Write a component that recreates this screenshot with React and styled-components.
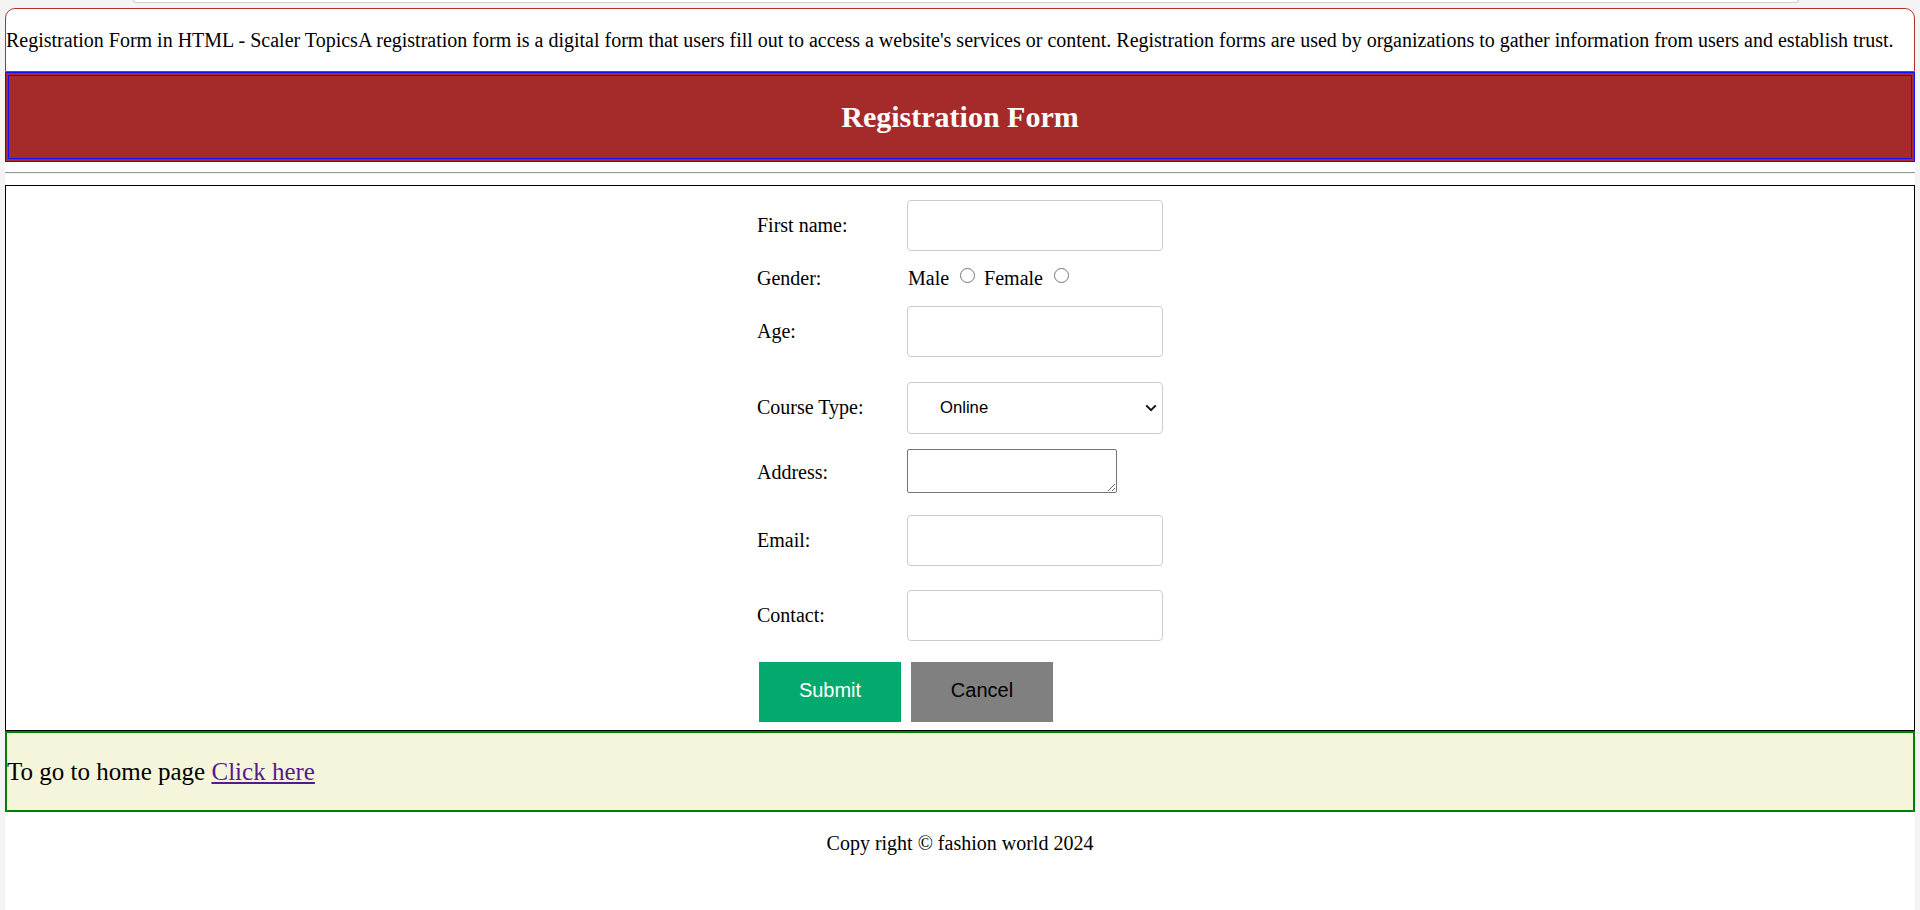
import React from "react";
import styled, { createGlobalStyle } from "styled-components";

const Global = createGlobalStyle`
  html, body { margin: 0; padding: 0; }
  body {
    background: #f4f4f4;
    font-family: "Liberation Serif", "Times New Roman", serif;
    font-size: 20px;
    color: #000;
  }
`;

const Page = styled.div`
  min-height: 910px;
  padding: 0 5px;
  display: flex;
  flex-direction: column;
`;

const TopStrip = styled.div`
  height: 8px;
  display: flex;
`;

const TabEdge = styled.div`
  margin-left: 128px;
  width: 1664px;
  height: 2px;
  background: #fff;
  border: 1px solid #cfcfcf;
  border-top: none;
  border-radius: 0 0 10px 10px;
`;

const Main = styled.main`
  flex: 1;
  background: #fff;
  border-radius: 10px 10px 0 0;
  display: flex;
  flex-direction: column;
`;

const IntroCard = styled.section`
  border: 1px solid #b3302b;
  border-radius: 10px 10px 0 0;
`;

const Intro = styled.p`
  margin: 20px 0;
  line-height: 22px;
  white-space: nowrap;
`;

const Header = styled.header`
  background: #a52a2a;
  border: 4px double #1010ff;
  padding: 24px 0;
  text-align: center;
`;

const Title = styled.h2`
  margin: 0;
  font-size: 30px;
  line-height: 34px;
  font-weight: bold;
  color: #fff;
`;

const Rule = styled.hr`
  height: 0;
  margin: 10px 0 11px;
  border: none;
  border-top: 1px solid #9a9a9a;
  border-bottom: 1px solid #eeeeee;
`;

const FormBox = styled.section`
  border: 1px solid #000;
  padding: 4px 0 8px;
`;

const Form = styled.form`
  width: 406px;
  margin: 0 auto;
  display: flex;
  flex-direction: column;
`;

const Row = styled.div`
  display: grid;
  grid-template-columns: 150px 256px;
  align-items: center;
  height: ${(p) => p.$h}px;
`;

const Label = styled.label`
  line-height: 23px;
`;

const TextInput = styled.input`
  box-sizing: border-box;
  width: 256px;
  height: 51px;
  border: 1px solid #cccccc;
  border-radius: 4px;
  padding: 0 25px;
  margin: 0;
  font-family: "Liberation Sans", Arial, sans-serif;
  font-size: 16.67px;
  background: #fff;
`;

const Choice = styled.div`
  line-height: 23px;
  white-space: nowrap;
  padding-left: 1px;
`;

const Radio = styled.input`
  appearance: none;
  width: 15px;
  height: 15px;
  margin: 0 4px 2px 6px;
  border: 1px solid #767676;
  border-radius: 50%;
  background: #fff;
  vertical-align: baseline;
  box-sizing: border-box;
`;

const SelectWrap = styled.div`
  position: relative;
  width: 256px;
  height: 52px;
`;

const Select = styled.select`
  appearance: none;
  box-sizing: border-box;
  width: 100%;
  height: 100%;
  border: 1px solid #cccccc;
  border-radius: 4px;
  padding: 0 30px 0 32px;
  margin: 0;
  font-family: "Liberation Sans", Arial, sans-serif;
  font-size: 16.67px;
  color: #000;
  background: #fff;
`;

const Chevron = styled.svg`
  position: absolute;
  right: 6px;
  top: 50%;
  transform: translateY(-50%);
  pointer-events: none;
`;

const Area = styled.textarea`
  box-sizing: border-box;
  align-self: start;
  width: 210px;
  height: 44px;
  margin: 0;
  border: 1px solid #767676;
  border-radius: 2px;
  font-family: "Liberation Mono", monospace;
  font-size: 16.67px;
`;

const Buttons = styled.div`
  display: flex;
  gap: 10px;
  padding: 15px 0 0 2px;
`;

const Button = styled.button`
  width: 142px;
  height: 60px;
  border: none;
  margin: 0;
  padding: 0 0 3px;
  font-family: "Liberation Sans", Arial, sans-serif;
  font-size: 20px;
  background: ${(p) => (p.$primary ? "#04aa6d" : "#808080")};
  color: ${(p) => (p.$primary ? "#fff" : "#000")};
`;

const HomeBox = styled.section`
  background: #f5f5dc;
  border: 2px solid #008000;
`;

const HomeText = styled.p`
  margin: 24px 0;
  font-size: 25px;
  line-height: 29px;
`;

const Link = styled.a`
  color: #551a8b;
  text-decoration: underline;
`;

const Footer = styled.footer`
  text-align: center;
`;

const FooterText = styled.p`
  margin: 20px 0;
  line-height: 23px;
`;

export default function App() {
  return (
    <>
      <Global />
      <Page>
        <TopStrip>
          <TabEdge />
        </TopStrip>
        <Main>
          <IntroCard>
            <Intro>
              Registration Form in HTML - Scaler TopicsA registration form is a digital form that users fill out to access a website's services or content. Registration forms are used by organizations to gather information from users and establish trust.
            </Intro>
          </IntroCard>
          <Header>
            <Title>Registration Form</Title>
          </Header>
          <Rule />
          <FormBox>
            <Form onSubmit={(e) => e.preventDefault()}>
              <Row $h={70}>
                <Label>First name:</Label>
                <TextInput type="text" />
              </Row>
              <Row $h={36}>
                <Label>Gender:</Label>
                <Choice>
                  Male{" "}<Radio type="radio" name="gender" />{" "}Female{" "}<Radio type="radio" name="gender" />
                </Choice>
              </Row>
              <Row $h={70}>
                <Label>Age:</Label>
                <TextInput type="text" />
              </Row>
              <Row $h={83}>
                <Label>Course Type:</Label>
                <SelectWrap>
                  <Select defaultValue="online">
                    <option value="online">Online</option>
                    <option value="offline">Offline</option>
                  </Select>
                  <Chevron width="12" height="8" viewBox="0 0 12 8">
                    <path d="M1.2 1.4 L6 6.2 L10.8 1.4" fill="none" stroke="#111" strokeWidth="2" />
                  </Chevron>
                </SelectWrap>
              </Row>
              <Row $h={47}>
                <Label>Address:</Label>
                <Area />
              </Row>
              <Row $h={88}>
                <Label>Email:</Label>
                <TextInput type="email" />
              </Row>
              <Row $h={63}>
                <Label>Contact:</Label>
                <TextInput type="text" />
              </Row>
              <Buttons>
                <Button type="submit" $primary>Submit</Button>
                <Button type="button">Cancel</Button>
              </Buttons>
            </Form>
          </FormBox>
          <HomeBox>
            <HomeText>
              To go to home page <Link href="#home">Click here</Link>
            </HomeText>
          </HomeBox>
          <Footer>
            <FooterText>Copy right © fashion world 2024</FooterText>
          </Footer>
        </Main>
      </Page>
    </>
  );
}
